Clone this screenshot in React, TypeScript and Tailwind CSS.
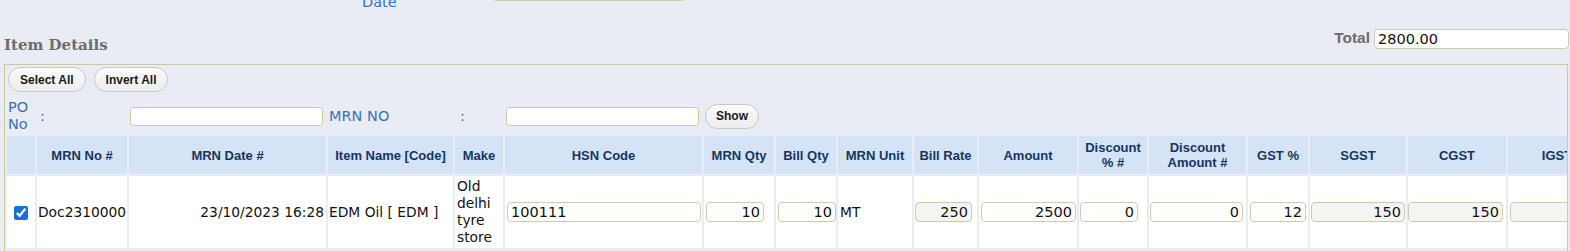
import React from 'react';

const cols = [
  { label: '', w: 'w-[28px]' },
  { label: 'MRN No #', w: 'w-[90px]' },
  { label: 'MRN Date #', w: 'w-[197px]' },
  { label: 'Item Name [Code]', w: 'w-[125px]' },
  { label: 'Make', w: 'w-[48px]' },
  { label: 'HSN Code', w: 'w-[197px]' },
  { label: 'MRN Qty', w: 'w-[70px]' },
  { label: 'Bill Qty', w: 'w-[60px]' },
  { label: 'MRN Unit', w: 'w-[74px]' },
  { label: 'Bill Rate', w: 'w-[63px]' },
  { label: 'Amount', w: 'w-[98px]' },
  { label: 'Discount % #', w: 'w-[68px]' },
  { label: 'Discount Amount #', w: 'w-[97px]' },
  { label: 'GST %', w: 'w-[60px]' },
  { label: 'SGST', w: 'w-[96px]' },
  { label: 'CGST', w: 'w-[98px]' },
  { label: 'IGST', w: 'w-[98px]' },
];

const inputBase =
  'h-[20px] rounded-[4px] border border-[#cfcba6] px-[3px] text-[14.5px] leading-[18px] text-[#111] outline-none';

function Field({ value, w, right, gray }: { value: string; w: string; right?: boolean; gray?: boolean }) {
  return (
    <input
      readOnly
      defaultValue={value}
      className={`${inputBase} ${w} ${right ? 'text-right' : 'text-left'} ${gray ? 'bg-[#f4f4f2]' : 'bg-white'}`}
    />
  );
}

function PillButton({ children }: { children: React.ReactNode }) {
  return (
    <button className="h-[25px] rounded-full border border-[#c8c8c8] bg-linear-to-b from-[#fbfbfb] to-[#ededed] px-[11px] font-['Liberation_Sans'] text-[12px] font-bold text-[#1a1a1a]">
      {children}
    </button>
  );
}

export default function App() {
  return (
    <div className="flex min-h-screen flex-col bg-[#e9ecf4] font-['DejaVu_Sans'] text-[#111]">
      {/* previous section, mostly scrolled out of view */}
      <div className="flex h-[11px] items-start">
        <span className="-mt-[6px] ml-[362px] w-[130px] text-[14.5px] leading-[17px] text-[#3a72b5]">Date</span>
        <input className="-mt-[19px] h-[20px] w-[194px] rounded-[4px] border border-[#cfcba6] bg-white" />
      </div>

      <div className="mt-[18px] flex items-start justify-between">
        <h2 className="mt-[7px] pl-[4px] font-['DejaVu_Serif'] text-[15px] font-bold leading-[18px] text-[#6c6c6c]">
          Item Details
        </h2>
        <div className="mr-[1px] flex items-start">
          <span className="mr-[4px] font-['Liberation_Sans'] text-[15.5px] font-bold leading-[18px] text-[#6c6c6c]">
            Total
          </span>
          <input
            readOnly
            defaultValue="2800.00"
            className="h-[20px] w-[195px] rounded-[4px] border border-[#cfcba6] bg-white px-[3px] text-[14.5px] leading-[18px] text-[#111] outline-none"
          />
        </div>
      </div>

      <div className="ml-[4px] mr-[2px] mt-[10px] overflow-hidden border border-[#cdc9a5] pb-[10px]">
        <div className="ml-[3px] mt-[2px] flex gap-[8px]">
          <PillButton>Select All</PillButton>
          <PillButton>Invert All</PillButton>
        </div>

        <table className="mt-[4px] w-[1603px] table-fixed border-separate border-spacing-[2px]">
          <colgroup>
            {cols.map((c, i) => (
              <col key={i} className={c.w} />
            ))}
          </colgroup>
          <tbody>
            {/* filter row */}
            <tr className="text-[14.5px] leading-[17px] text-[#3a72b5]">
              <td className="px-px py-px align-middle">PO No</td>
              <td className="pl-[3px] align-middle">:</td>
              <td className="px-px align-middle">
                <input className="h-[19px] w-[193px] rounded-[4px] border border-[#cfcba6] bg-white" />
              </td>
              <td className="px-px align-middle">MRN NO</td>
              <td className="pl-[5px] align-middle">:</td>
              <td className="px-px align-middle">
                <input className="h-[19px] w-[193px] rounded-[4px] border border-[#cfcba6] bg-white" />
              </td>
              <td colSpan={11} className="px-px align-middle">
                <button className="h-[25px] rounded-full border border-[#c8c8c8] bg-linear-to-b from-[#fbfbfb] to-[#ededed] px-[10px] font-['Liberation_Sans'] text-[12px] font-bold text-[#1a1a1a]">
                  Show
                </button>
              </td>
            </tr>

            {/* header */}
            <tr>
              {cols.map((c, i) => (
                <th
                  key={i}
                  className="h-[38px] bg-[#d5e3f7] px-[2px] text-center align-middle font-['Liberation_Sans'] text-[13px] font-bold leading-[15px] text-[#16365e]"
                >
                  {c.label}
                </th>
              ))}
            </tr>

            {/* data row */}
            <tr className="text-[13.8px] leading-[17px]">
              <td className="bg-white py-[2px] text-center align-middle">
                <input type="checkbox" defaultChecked className="h-[14px] w-[14px] align-middle accent-[#1a6fe0]" />
              </td>
              <td className="bg-white px-px py-[2px] align-middle">Doc2310000</td>
              <td className="bg-white px-[2px] py-[2px] text-right align-middle">23/10/2023 16:28</td>
              <td className="bg-white px-px py-[2px] align-middle">EDM Oil [ EDM ]</td>
              <td className="bg-white px-[2px] py-[2px] align-middle">Old delhi tyre store</td>
              <td className="bg-white px-[2px] py-[2px] align-middle">
                <Field value="100111" w="w-[194px]" />
              </td>
              <td className="bg-white px-[2px] py-[2px] align-middle">
                <Field value="10" w="w-[58px]" right />
              </td>
              <td className="bg-white px-[2px] py-[2px] align-middle">
                <Field value="10" w="w-[58px]" right />
              </td>
              <td className="bg-white px-[2px] py-[2px] align-middle">MT</td>
              <td className="bg-white px-px py-[2px] align-middle">
                <Field value="250" w="w-[57px]" right gray />
              </td>
              <td className="bg-white px-[2px] py-[2px] align-middle">
                <Field value="2500" w="w-[95px]" right />
              </td>
              <td className="bg-white px-px py-[2px] align-middle">
                <Field value="0" w="w-[58px]" right />
              </td>
              <td className="bg-white px-px py-[2px] align-middle">
                <Field value="0" w="w-[93px]" right />
              </td>
              <td className="bg-white px-[2px] py-[2px] align-middle">
                <Field value="12" w="w-[56px]" right />
              </td>
              <td className="bg-white px-px py-[2px] align-middle">
                <Field value="150" w="w-[94px]" right gray />
              </td>
              <td className="bg-white px-0 py-[2px] align-middle">
                <Field value="150" w="w-[95px]" right gray />
              </td>
              <td className="bg-white px-[2px] py-[2px] align-middle">
                <Field value="" w="w-[95px]" right gray />
              </td>
            </tr>
          </tbody>
        </table>
      </div>
    </div>
  );
}
